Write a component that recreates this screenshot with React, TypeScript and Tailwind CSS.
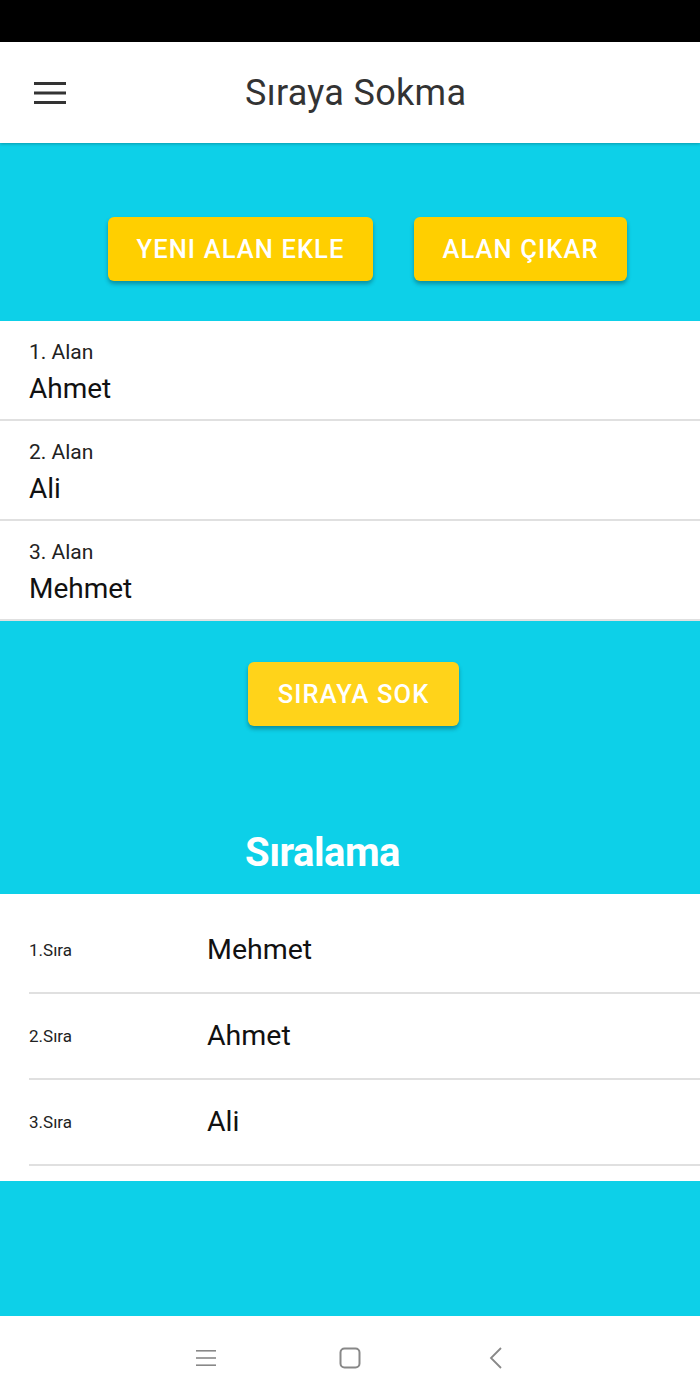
const fields = ['Ahmet', 'Ali', 'Mehmet'];
const sorted = ['Mehmet', 'Ahmet', 'Ali'];

function YellowButton({ label, className }: { label: string; className: string }) {
  return (
    <button
      className={`h-16 rounded-md text-white text-[25.5px] font-medium tracking-[1.1px] shadow-[0_3px_4px_rgba(0,0,0,0.3)] ${className}`}
    >
      {label}
    </button>
  );
}

export default function App() {
  return (
    <div className="w-[700px] h-[1400px] flex flex-col bg-white font-['Roboto',sans-serif] overflow-hidden">
      <div className="h-[42px] bg-black shrink-0" />

      <header className="h-[101px] shrink-0 bg-white flex items-center relative z-10 shadow-[0_1px_3px_rgba(0,0,0,0.25)]">
        <div className="pl-[34px] w-[245px]">
          <svg width="32" height="22" viewBox="0 0 32 22">
            <rect x="0" y="0" width="32" height="3" fill="#333" />
            <rect x="0" y="9.5" width="32" height="3" fill="#333" />
            <rect x="0" y="19" width="32" height="3" fill="#333" />
          </svg>
        </div>
        <h1 className="text-[36px] text-[#333] leading-none tracking-[0.3px]">Sıraya Sokma</h1>
      </header>

      <section className="h-[178px] shrink-0 bg-[#0dd0e8] flex items-start pt-[74px] pl-[108px] gap-[41px]">
        <YellowButton label="YENI ALAN EKLE" className="w-[265px] bg-[#ffcf00]" />
        <YellowButton label="ALAN ÇIKAR" className="w-[213px] bg-[#ffcf00]" />
      </section>

      <section className="shrink-0 bg-white">
        {fields.map((name, i) => (
          <div key={i} className="h-[100px] border-b-[2px] border-[#e0e0e0] pl-[29px] pt-[18px]">
            <div className="text-[21px] text-[#222] leading-[26px]">{i + 1}. Alan</div>
            <div className="text-[28px] text-[#111] leading-[36px] mt-[6px]">{name}</div>
          </div>
        ))}
      </section>

      <section className="h-[273px] shrink-0 bg-[#0dd0e8] flex flex-col">
        <div className="flex justify-center pt-[41px] pl-[7px]">
          <YellowButton label="SIRAYA SOK" className="w-[211px] bg-[#ffd31a]" />
        </div>
        <h2 className="mt-[107px] ml-[245px] text-[40px] font-bold text-white leading-none tracking-[-0.5px]">Sıralama</h2>
      </section>

      <section className="h-[287px] shrink-0 bg-white pt-[14px]">
        {sorted.map((name, i) => (
          <div key={i} className="ml-[29px] h-[86px] flex items-center pt-[2px] border-b-[2px] border-[#e0e0e0]">
            <span className="w-[178px] text-[17px] text-[#222]">{i + 1}.Sıra</span>
            <span className="text-[28.5px] text-[#111] -mt-[1px]">{name}</span>
          </div>
        ))}
      </section>

      <section className="h-[135px] shrink-0 bg-[#0dd0e8]" />

      <nav className="flex-1 bg-white flex items-center pl-[196px]">
        <svg width="20" height="18" viewBox="0 0 20 18">
          <rect x="0" y="1" width="20" height="1.6" fill="#888" />
          <rect x="0" y="8.2" width="20" height="1.6" fill="#888" />
          <rect x="0" y="15.4" width="20" height="1.6" fill="#888" />
        </svg>
        <svg width="22" height="22" viewBox="0 0 22 22" className="ml-[123px]">
          <rect x="1.5" y="1.5" width="19" height="19" rx="4" fill="none" stroke="#888" strokeWidth="2" />
        </svg>
        <svg width="14" height="22" viewBox="0 0 14 22" className="ml-[128px]">
          <path d="M12 1 L2 11 L12 21" fill="none" stroke="#888" strokeWidth="1.8" />
        </svg>
      </nav>
    </div>
  );
}
